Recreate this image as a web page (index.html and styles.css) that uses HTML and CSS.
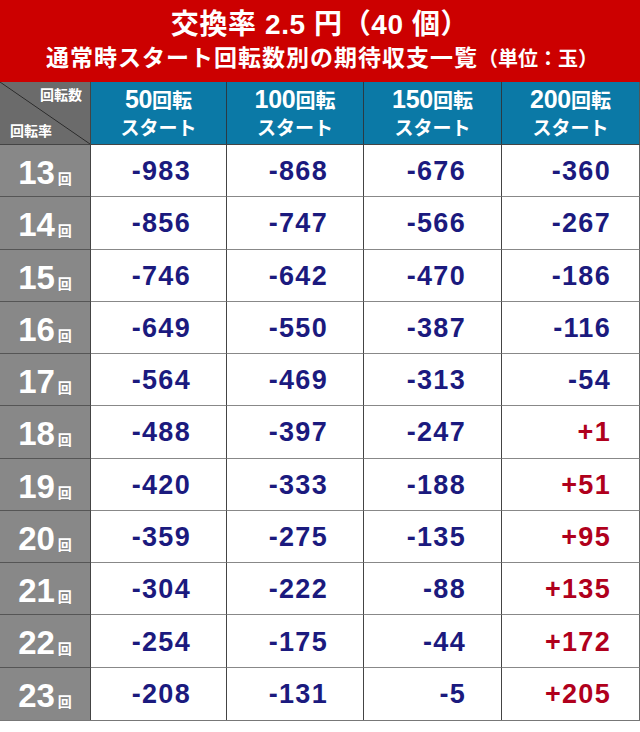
FILE: index.html
```html
<!DOCTYPE html>
<html lang="ja">
<head>
<meta charset="utf-8">
<title>交換率 2.5 円（40 個）</title>
<link rel="stylesheet" href="styles.css">
</head>
<body>
<div class="page">
  <header class="banner">
    <div class="title">交換率 2.5 円（40 個）</div>
    <div class="subtitle">通常時スタート回転数別の期待収支一覧<span class="unit">（単位：玉）</span></div>
  </header>
  <div class="grid">
    <div class="corner"><span class="c-top">回転数</span><span class="c-bot">回転率</span></div>
    <div class="head"><span class="hl"><span class="hn">50</span>回転</span><span class="hl2">スタート</span></div>
    <div class="head"><span class="hl"><span class="hn">100</span>回転</span><span class="hl2">スタート</span></div>
    <div class="head"><span class="hl"><span class="hn">150</span>回転</span><span class="hl2">スタート</span></div>
    <div class="head last"><span class="hl"><span class="hn">200</span>回転</span><span class="hl2">スタート</span></div>

    <div class="lab"><span class="ln">13</span><span class="lk">回</span></div>
    <div class="num">-983</div><div class="num">-868</div><div class="num">-676</div><div class="num c4">-360</div>

    <div class="lab"><span class="ln">14</span><span class="lk">回</span></div>
    <div class="num">-856</div><div class="num">-747</div><div class="num">-566</div><div class="num c4">-267</div>

    <div class="lab"><span class="ln">15</span><span class="lk">回</span></div>
    <div class="num">-746</div><div class="num">-642</div><div class="num">-470</div><div class="num c4">-186</div>

    <div class="lab"><span class="ln">16</span><span class="lk">回</span></div>
    <div class="num">-649</div><div class="num">-550</div><div class="num">-387</div><div class="num c4">-116</div>

    <div class="lab"><span class="ln">17</span><span class="lk">回</span></div>
    <div class="num">-564</div><div class="num">-469</div><div class="num">-313</div><div class="num c4">-54</div>

    <div class="lab"><span class="ln">18</span><span class="lk">回</span></div>
    <div class="num">-488</div><div class="num">-397</div><div class="num">-247</div><div class="num c4 pos">+1</div>

    <div class="lab"><span class="ln">19</span><span class="lk">回</span></div>
    <div class="num">-420</div><div class="num">-333</div><div class="num">-188</div><div class="num c4 pos">+51</div>

    <div class="lab"><span class="ln">20</span><span class="lk">回</span></div>
    <div class="num">-359</div><div class="num">-275</div><div class="num">-135</div><div class="num c4 pos">+95</div>

    <div class="lab"><span class="ln">21</span><span class="lk">回</span></div>
    <div class="num">-304</div><div class="num">-222</div><div class="num">-88</div><div class="num c4 pos">+135</div>

    <div class="lab"><span class="ln">22</span><span class="lk">回</span></div>
    <div class="num">-254</div><div class="num">-175</div><div class="num">-44</div><div class="num c4 pos">+172</div>

    <div class="lab"><span class="ln">23</span><span class="lk">回</span></div>
    <div class="num">-208</div><div class="num">-131</div><div class="num">-5</div><div class="num c4 pos">+205</div>
  </div>
</div>
</body>
</html>
```

FILE: styles.css
```css
html, body {
  margin: 0;
  padding: 0;
  background: #ffffff;
}
.page {
  width: 640px;
  font-family: "Liberation Sans", "Noto Sans CJK JP", sans-serif;
  font-weight: 700;
}
.banner {
  height: 82px;
  background: #cc0000;
  color: #ffffff;
  display: flex;
  flex-direction: column;
  align-items: center;
  justify-content: flex-start;
  box-sizing: border-box;
  padding-top: 6px;
}
.title {
  font-size: 28px;
  line-height: 38px;
  letter-spacing: 0.6px;
  white-space: nowrap;
}
.subtitle {
  font-size: 23px;
  line-height: 28px;
  letter-spacing: 1px;
  white-space: nowrap;
  padding-left: 4px;
}
.unit {
  font-size: 20px;
  letter-spacing: 0;
}
.grid {
  display: grid;
  grid-template-columns: 91px 136px 137px 138px 138px;
  grid-template-rows: 63px repeat(11, 1fr);
  height: 639px;
  border-bottom: 1px solid #777777;
  box-sizing: border-box;
  width: 640px;
}
.corner {
  background: linear-gradient(to top right, #6b6b6b calc(50% - 0.8px), #2a2a2a 50%, #6b6b6b calc(50% + 0.8px));
  border-right: 1px solid #444444;
  border-bottom: 1px solid #444444;
  color: #ffffff;
  font-size: 14px;
  line-height: 16px;
  display: flex;
  flex-direction: column;
  justify-content: space-between;
  padding: 5px 8px 5px 10px;
  box-sizing: border-box;
}
.c-top {
  align-self: flex-end;
}
.c-bot {
  align-self: flex-start;
}
.head {
  background: #0b79a6;
  color: #ffffff;
  border-right: 1px solid #2a3a44;
  border-bottom: 1px solid #444444;
  display: flex;
  flex-direction: column;
  align-items: center;
  justify-content: center;
  padding-top: 1px;
  box-sizing: border-box;
}
.head.last {
  border-right: 1px solid #555555;
}
.hl {
  font-size: 20px;
  line-height: 27px;
  white-space: nowrap;
}
.hn {
  font-size: 25px;
  letter-spacing: -0.3px;
}
.hl2 {
  font-size: 19px;
  line-height: 27px;
  white-space: nowrap;
}
.lab {
  background: #888888;
  color: #ffffff;
  border-right: 1px solid #444444;
  border-bottom: 1px solid #555555;
  display: flex;
  align-items: baseline;
  justify-content: center;
  padding-top: 6px;
  box-sizing: border-box;
}
.lab:nth-last-child(5) {
  border-bottom: none;
}
.ln {
  font-size: 33px;
  line-height: 44px;
}
.lk {
  font-size: 14px;
  margin-left: 3px;
}
.num {
  color: #1b1a7e;
  font-size: 27px;
  letter-spacing: 1.3px;
  border-right: 1px solid #444444;
  border-bottom: 1px solid #888888;
  display: flex;
  align-items: center;
  justify-content: flex-end;
  padding-right: 35px;
  padding-top: 2px;
  box-sizing: border-box;
}
.num:nth-last-child(-n+4) {
  border-bottom: none;
}
.num.c4 {
  padding-right: 28px;
  border-right: 1px solid #666666;
}
.num.pos {
  color: #b0001c;
}
```
